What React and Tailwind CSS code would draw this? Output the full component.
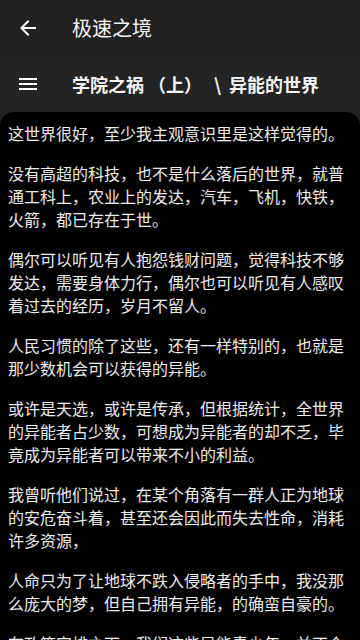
import React from "react";

const paragraphs = [
  "这世界很好，至少我主观意识里是这样觉得的。",
  "没有高超的科技，也不是什么落后的世界，就普通工科上，农业上的发达，汽车，飞机，快铁，火箭，都已存在于世。",
  "偶尔可以听见有人抱怨钱财问题，觉得科技不够发达，需要身体力行，偶尔也可以听见有人感叹着过去的经历，岁月不留人。",
  "人民习惯的除了这些，还有一样特别的，也就是那少数机会可以获得的异能。",
  "或许是天选，或许是传承，但根据统计，全世界的异能者占少数，可想成为异能者的却不乏，毕竟成为异能者可以带来不小的利益。",
  "我曾听他们说过，在某个角落有一群人正为地球的安危奋斗着，甚至还会因此而失去性命，消耗许多资源，",
  "人命只为了让地球不跌入侵略者的手中，我没那么庞大的梦，但自己拥有异能，的确蛮自豪的。",
  "在政策安排之下，我们这些异能青少年，并不会因此而被特殊对待，我们同样需要上学。",
];

const font = {
  fontFamily: '"Noto Sans CJK SC", "Noto Sans", Roboto, sans-serif',
};

export default function App() {
  return (
    <div
      className="w-[360px] h-[640px] overflow-hidden bg-[#232323] flex flex-col"
      style={font}
    >
      <div className="h-[56px] bg-[#212121] flex items-center shrink-0">
        <div className="w-[72px] flex items-center pl-[16px]">
          <svg width="24" height="24" viewBox="0 0 24 24" fill="#ffffff">
            <path d="M20 11H7.83l5.59-5.59L12 4l-8 8 8 8 1.41-1.41L7.83 13H20v-2z" />
          </svg>
        </div>
        <div className="text-[20px] text-[#f2f2f2] leading-none">极速之境</div>
      </div>
      <div className="h-[56px] bg-[#242424] flex items-center shrink-0">
        <div className="w-[72px] flex items-center pl-[16px]">
          <svg width="24" height="24" viewBox="0 0 24 24" fill="#ffffff">
            <path d="M3 18h18v-2H3v2zm0-5h18v-2H3v2zm0-7v2h18V6H3z" />
          </svg>
        </div>
        <div className="text-[18px] font-bold text-[#f5f5f5] leading-none whitespace-nowrap">
          学院之祸 （上）<span className="ml-[12px] mr-[8px]">\</span>异能的世界
        </div>
      </div>
      <div className="flex-1 bg-black rounded-t-[14px] px-[8px] pt-[10px] overflow-hidden">
        {paragraphs.map((p, i) => (
          <p
            key={i}
            className="text-[16px] leading-[23px] text-[#ececec] mb-[17px]"
          >
            {p}
          </p>
        ))}
      </div>
    </div>
  );
}
